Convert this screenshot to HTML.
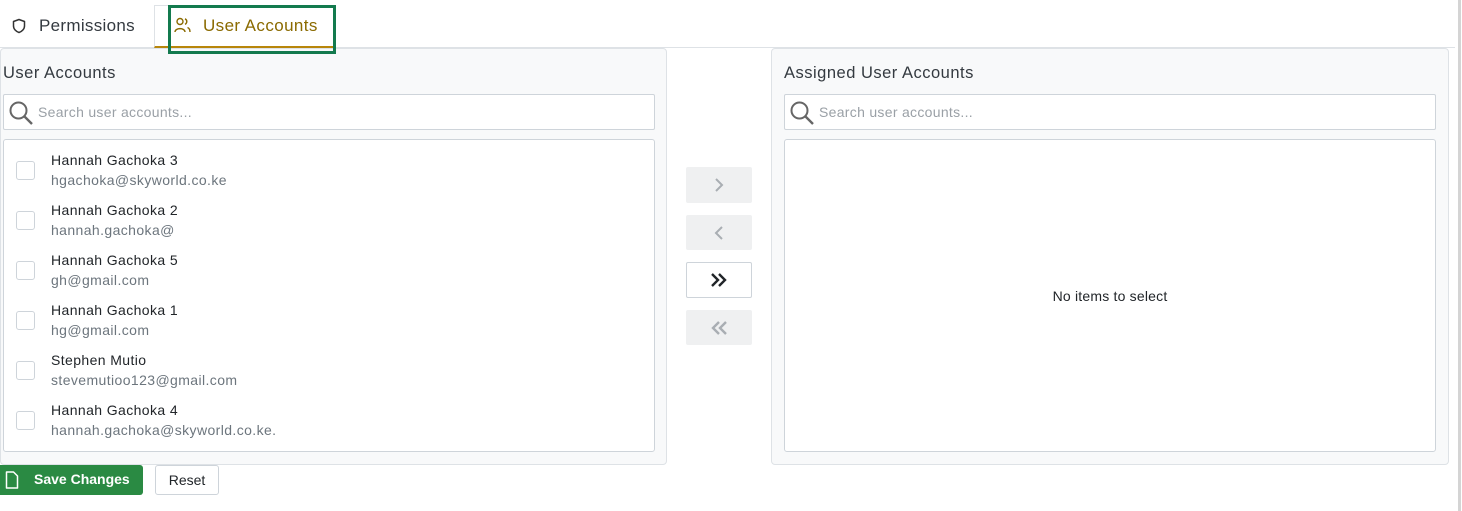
<!DOCTYPE html>
<html><head><style>
*{box-sizing:border-box;margin:0;padding:0}
body{width:1462px;height:511px;background:#fff;font-family:"Liberation Sans","DejaVu Sans",sans-serif;position:relative;overflow:hidden;color:#212529}
.abs{position:absolute}
.tabline{left:0;top:47px;width:1455px;height:1px;background:#dee2e6}
.vline{left:1458px;top:0;width:3px;height:511px;background:#d4d4d4}
.panel{background:#f8f9fa;border:1px solid #dee2e6;border-radius:4px}
.title{font-size:16.5px;color:#343a40;letter-spacing:0.5px}
.search{background:#fff;border:1px solid #ced4da;border-radius:2px;height:36px}
.search span{position:absolute;left:34px;top:9px;font-size:14px;color:#9aa0a6;letter-spacing:0.3px}
.list{background:#fff;border:1px solid #ced4da;border-radius:3px}
.row{position:absolute;left:12px}
.cb{position:absolute;left:0;top:1px;width:19px;height:19px;border:1px solid #ced4da;border-radius:3px;background:#fff}
.nm{position:absolute;left:35px;top:-8px;font-size:14px;color:#212529;white-space:nowrap;letter-spacing:0.4px}
.em{position:absolute;left:35px;top:12px;font-size:14px;color:#6c757d;white-space:nowrap;letter-spacing:0.4px}
.btn{position:absolute;left:686px;width:66px;border-radius:2px;background:#eff0f1;display:flex;align-items:center;justify-content:center}
</style></head><body>
<div class="abs tabline"></div>
<div class="abs vline"></div>
<!-- tabs -->
<svg class="abs" style="left:11px;top:18px" width="16" height="16" viewBox="0 0 16 16"><path d="M8 1.5 L13.5 3.5 V8 C13.5 11 11 13.5 8 14.5 C5 13.5 2.5 11 2.5 8 V3.5 Z" fill="none" stroke="#333" stroke-width="1.5" stroke-linejoin="round"/></svg>
<div class="abs" style="left:39px;top:16px;font-size:17px;color:#343a40;letter-spacing:0.3px">Permissions</div>
<div class="abs" style="left:154px;top:5px;width:182px;height:43px;background:#fff;border:1px solid #dee2e6;border-bottom:2px solid #b8860b"></div>
<div class="abs" style="left:168px;top:5px;width:168px;height:49px;border:3px solid #137a4e;z-index:5"></div>
<svg class="abs" style="left:174px;top:17px" width="18" height="16" viewBox="0 0 18 16"><circle cx="6" cy="4.5" r="3" fill="none" stroke="#8a6a00" stroke-width="1.4"/><path d="M1 15 C1 10.5 11 10.5 11 15" fill="none" stroke="#8a6a00" stroke-width="1.4"/><path d="M11 1.8 A3 3 0 0 1 11 7.3 M13.5 10.5 C15.5 11.3 16 13 16 15" fill="none" stroke="#8a6a00" stroke-width="1.4"/></svg>
<div class="abs" style="left:203px;top:16px;font-size:17px;color:#8a6a00;letter-spacing:0.4px">User Accounts</div>

<!-- left panel -->
<div class="abs panel" style="left:0;top:48px;width:667px;height:417px"></div>
<div class="abs title" style="left:3px;top:64px">User Accounts</div>
<div class="abs search" style="left:3px;top:94px;width:652px"><svg style="position:absolute;left:4px;top:5px" width="26" height="26" viewBox="0 0 26 26"><circle cx="10.5" cy="10.5" r="8" fill="none" stroke="#666" stroke-width="2"/><path d="M16.5 16.5 L24 24" stroke="#666" stroke-width="2.4"/></svg><span>Search user accounts...</span></div>
<div class="abs list" style="left:3px;top:139px;width:652px;height:313px">
 <div class="row" style="top:20px"><div class="cb"></div><div class="nm">Hannah Gachoka 3</div><div class="em">hgachoka@skyworld.co.ke</div></div>
 <div class="row" style="top:70px"><div class="cb"></div><div class="nm">Hannah Gachoka 2</div><div class="em">hannah.gachoka@</div></div>
 <div class="row" style="top:120px"><div class="cb"></div><div class="nm">Hannah Gachoka 5</div><div class="em">gh@gmail.com</div></div>
 <div class="row" style="top:170px"><div class="cb"></div><div class="nm">Hannah Gachoka 1</div><div class="em">hg@gmail.com</div></div>
 <div class="row" style="top:220px"><div class="cb"></div><div class="nm">Stephen Mutio</div><div class="em">stevemutioo123@gmail.com</div></div>
 <div class="row" style="top:270px"><div class="cb"></div><div class="nm">Hannah Gachoka 4</div><div class="em">hannah.gachoka@skyworld.co.ke.</div></div>
</div>

<!-- buttons -->
<div class="btn" style="top:167px;height:36px"><svg width="14" height="18" viewBox="0 0 14 18"><path d="M4 3 L10 9 L4 15" fill="none" stroke="#a9aeb3" stroke-width="2"/></svg></div>
<div class="btn" style="top:215px;height:35px"><svg width="14" height="18" viewBox="0 0 14 18"><path d="M10 3 L4 9 L10 15" fill="none" stroke="#a9aeb3" stroke-width="2"/></svg></div>
<div class="btn" style="top:262px;height:36px;background:#fff;border:1px solid #ced4da"><svg width="18" height="16" viewBox="0 0 18 16"><path d="M2 2 L8 8 L2 14 M9 2 L15 8 L9 14" fill="none" stroke="#212529" stroke-width="2.4"/></svg></div>
<div class="btn" style="top:310px;height:35px"><svg width="18" height="16" viewBox="0 0 18 16"><path d="M9 2 L3 8 L9 14 M16 2 L10 8 L16 14" fill="none" stroke="#a9aeb3" stroke-width="2.4"/></svg></div>

<!-- right panel -->
<div class="abs panel" style="left:771px;top:48px;width:678px;height:417px"></div>
<div class="abs title" style="left:784px;top:64px">Assigned User Accounts</div>
<div class="abs search" style="left:784px;top:94px;width:652px"><svg style="position:absolute;left:4px;top:5px" width="26" height="26" viewBox="0 0 26 26"><circle cx="10.5" cy="10.5" r="8" fill="none" stroke="#666" stroke-width="2"/><path d="M16.5 16.5 L24 24" stroke="#666" stroke-width="2.4"/></svg><span>Search user accounts...</span></div>
<div class="abs list" style="left:784px;top:139px;width:652px;height:313px"><div style="position:absolute;left:0;width:100%;top:148px;text-align:center;font-size:14px;color:#212529;letter-spacing:0.2px">No items to select</div></div>

<!-- footer -->
<div class="abs" style="left:0;top:465px;width:143px;height:30px;background:#2a8a43;border-radius:0 3px 3px 0"></div>
<svg class="abs" style="left:5px;top:471px" width="14" height="18" viewBox="0 0 14 18"><path d="M1.5 1 H8.5 L12.5 5 V17 H1.5 Z" fill="none" stroke="#fff" stroke-width="1.5" stroke-linejoin="round"/></svg>
<div class="abs" style="left:34px;top:471px;font-size:14px;font-weight:bold;color:#fff">Save Changes</div>
<div class="abs" style="left:155px;top:465px;width:64px;height:30px;border:1px solid #ced4da;border-radius:3px;background:#fff;font-size:14px;text-align:center;line-height:28px">Reset</div>
</body></html>
